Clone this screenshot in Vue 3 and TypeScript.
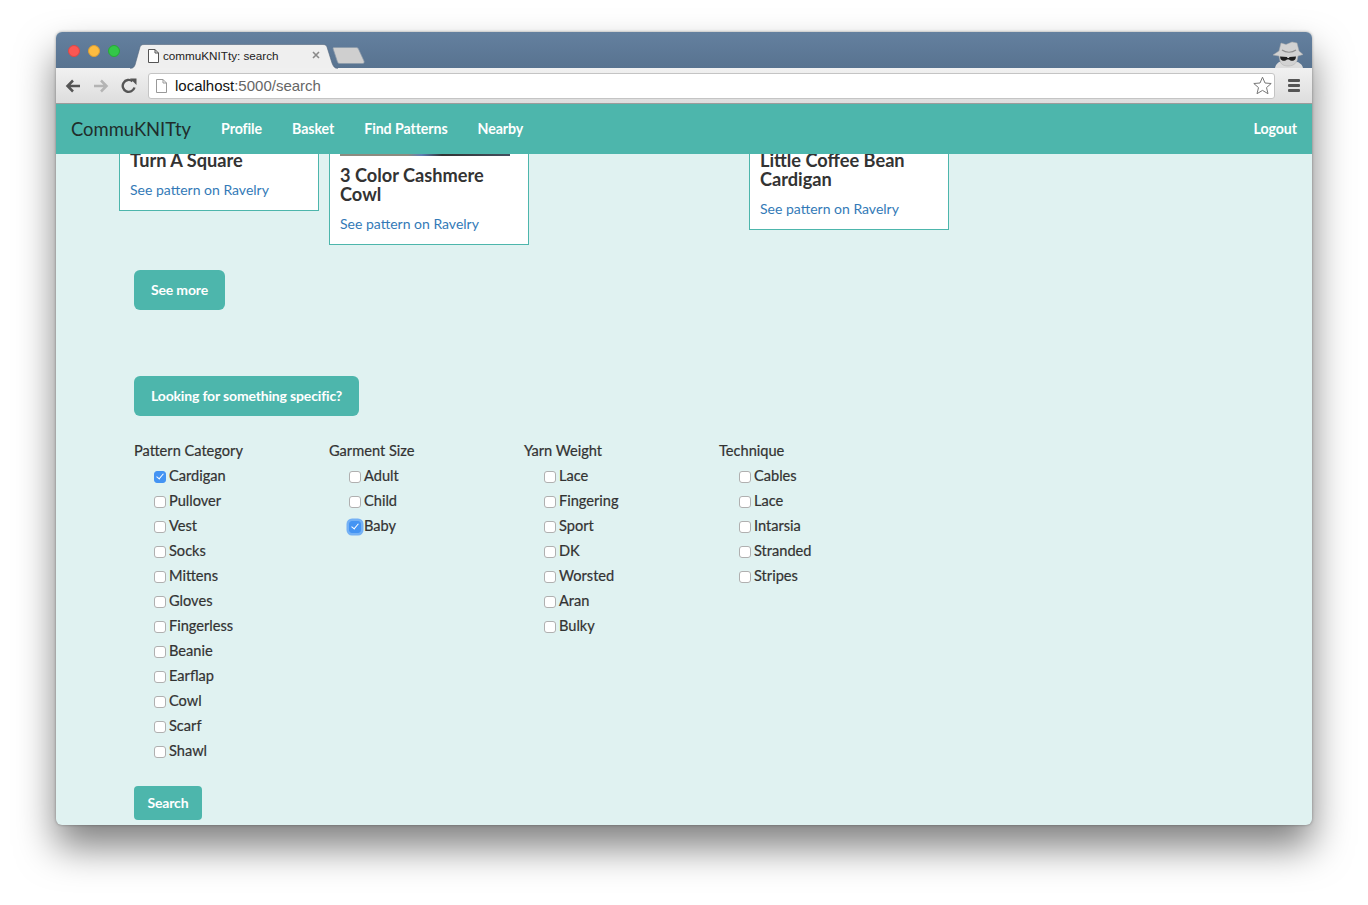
<script setup lang="ts">
interface Group {
  title: string
  options: string[]
}

const checked = ['Cardigan', 'Baby']

const navLinks = ['Profile', 'Basket', 'Find Patterns', 'Nearby']

const groups: Group[] = [
  {
    title: 'Pattern Category',
    options: ['Cardigan', 'Pullover', 'Vest', 'Socks', 'Mittens', 'Gloves', 'Fingerless', 'Beanie', 'Earflap', 'Cowl', 'Scarf', 'Shawl'],
  },
  { title: 'Garment Size', options: ['Adult', 'Child', 'Baby'] },
  { title: 'Yarn Weight', options: ['Lace', 'Fingering', 'Sport', 'DK', 'Worsted', 'Aran', 'Bulky'] },
  { title: 'Technique', options: ['Cables', 'Lace', 'Intarsia', 'Stranded', 'Stripes'] },
]
</script>

<template>
  <div class="desktop">
    <div class="window">
      <div class="titlebar">
        <div class="lights">
          <span class="light red"></span>
          <span class="light yellow"></span>
          <span class="light green"></span>
        </div>
        <div class="tab">
          <svg class="tab-bg" width="210" height="25" viewBox="0 0 210 25">
            <path d="M0 24.5 C3 24.5 4 23 5 21 L10 3 C10.5 1.5 11.5 .5 14 .5 L193 .5 C195.5 .5 196.5 1.5 197 3 L202 19 C203.5 23 205 24.5 208 24.5" fill="#efefef" stroke="#54677c" stroke-width=".6" />
          </svg>
          <svg class="page-icon" width="11" height="14" viewBox="0 0 11 14">
            <path d="M.5.5 H7 L10.5 4 V13.5 H.5 Z M7 .5 V4 H10.5" fill="#fff" stroke="#555" stroke-width="1" />
          </svg>
          <span class="tab-title">commuKNITty: search</span>
          <svg class="tab-close" width="8" height="8" viewBox="0 0 8 8">
            <path d="M1 1 L7 7 M7 1 L1 7" stroke="#8a8a8a" stroke-width="1.6" />
          </svg>
        </div>
        <svg class="new-tab" width="33" height="17" viewBox="0 0 33 17">
          <path d="M1 1.5 C1 1 1.5 .5 2 .5 L24 .5 C25.5 .5 26 1 26.5 2 L32 14 C32.5 15.5 32 16.5 30.5 16.5 L8 16.5 C6.5 16.5 6 16 5.5 15 Z" fill="#cfcfcf" stroke="#8a99a9" stroke-width=".7" />
        </svg>
        <svg class="incognito" width="34" height="27" viewBox="0 0 34 27">
          <path d="M3 27 C4 23 6 21 10 20 L22 20 C27 21 30 23 31 27 Z" fill="#dcdcdc" />
          <path d="M9 2 L14 3.5 L20 1 L25 2 L27 10 L31 13.5 L26 15 L25 20 C23 24 19 25 16 25 C13 25 9 24 8 20 L7 15 L1 14 L7 10 Z" fill="#d2d2d2" stroke="#adadad" stroke-width=".5" />
          <path d="M10 9 C14 12 20 12 24 9" fill="none" stroke="#8e8e8e" stroke-width="1.2" />
          <path d="M8 15.5 L15 16 L15.5 17 L17 17 L17.5 16 L24 15.5 L23.5 18 C22 20.5 18.5 20 17 18.5 L15 18.5 C13.5 20 10 20.5 8.5 18 Z" fill="#1e1e1e" />
        </svg>
      </div>

      <div class="toolbar">
        <svg class="tool" width="16" height="14" viewBox="0 0 16 14">
          <path d="M15 7 H3 M8 1.5 L2.5 7 L8 12.5" fill="none" stroke="#555" stroke-width="2.5" />
        </svg>
        <svg class="tool" width="16" height="14" viewBox="0 0 16 14">
          <path d="M1 7 H13 M8 1.5 L13.5 7 L8 12.5" fill="none" stroke="#b4b4b4" stroke-width="2.5" />
        </svg>
        <svg class="tool" width="16" height="16" viewBox="0 0 16 16">
          <path d="M13.5 9.5 A6 6 0 1 1 11.5 3.2" fill="none" stroke="#555" stroke-width="2.4" />
          <path d="M9 .5 H15.5 V7 Z" fill="#555" />
        </svg>
        <div class="omnibox">
          <svg class="page-icon-url" width="11" height="14" viewBox="0 0 11 14">
            <path d="M.5.5 H7 L10.5 4 V13.5 H.5 Z M7 .5 V4 H10.5" fill="#fff" stroke="#999" stroke-width="1" />
          </svg>
          <span class="url"><span class="host">localhost</span>:5000/search</span>
          <svg class="star" width="19" height="19" viewBox="0 0 19 19">
            <path d="M9.5 1.2 L12 7 L18.2 7.5 L13.5 11.6 L15 17.7 L9.5 14.4 L4 17.7 L5.5 11.6 L.8 7.5 L7 7 Z" fill="#fff" stroke="#777" stroke-width="1" />
          </svg>
        </div>
        <div class="menu">
          <span></span>
          <span></span>
          <span></span>
        </div>
      </div>

      <nav class="navbar">
        <a class="brand">CommuKNITty</a>
        <a v-for="link in navLinks" :key="link" class="nav-link">{{ link }}</a>
        <a class="nav-link logout">Logout</a>
      </nav>

      <main class="content">
        <div class="results">
          <div class="card card-a">
            <h3>Turn A Square</h3>
            <a class="pattern-link">See pattern on Ravelry</a>
          </div>
          <div class="card card-b">
            <div class="photo"></div>
            <h3>3 Color Cashmere Cowl</h3>
            <a class="pattern-link">See pattern on Ravelry</a>
          </div>
          <div class="card card-empty"></div>
          <div class="card card-c">
            <h3>Little Coffee Bean Cardigan</h3>
            <a class="pattern-link">See pattern on Ravelry</a>
          </div>
        </div>

        <button class="btn btn-large see-more">See more</button>
        <button class="btn btn-large specific">Looking for something specific?</button>

        <form class="filters" @submit.prevent>
          <div v-for="group in groups" :key="group.title" class="filter-group">
            <div class="group-title">{{ group.title }}</div>
            <label v-for="option in group.options" :key="option" class="option">
              <input
                type="checkbox"
                :checked="checked.includes(option)"
                :class="{ focused: option === 'Baby' }"
              />
              <span>{{ option }}</span>
            </label>
          </div>
        </form>

        <button class="btn search">Search</button>
      </main>
    </div>
  </div>
</template>

<style>
html,
body {
  margin: 0;
  background: #fff;
}
</style>

<style scoped>
.desktop {
  width: 1368px;
  height: 905px;
  padding: 32px 56px 0;
  box-sizing: border-box;
  overflow: hidden;
  background: #fff;
}

.window {
  height: 793px;
  display: flex;
  flex-direction: column;
  overflow: hidden;
  border-radius: 6px;
  box-shadow: 0 22px 38px rgba(0, 0, 0, 0.5), 0 0 3px rgba(0, 0, 0, 0.35);
  font-family: Lato, "Open Sans", sans-serif;
  color: #333;
  background: #e0f2f1;
}

.titlebar {
  height: 36px;
  flex: none;
  display: flex;
  align-items: flex-start;
  position: relative;
  background: linear-gradient(#64809f, #587390);
}

.lights {
  display: flex;
  gap: 8px;
  padding: 13px 0 0 12px;
  width: 64px;
  flex: none;
}

.light {
  width: 12px;
  height: 12px;
  border-radius: 50%;
  box-sizing: border-box;
}

.red {
  background: #fc5753;
  border: 1px solid #df4744;
}

.yellow {
  background: #fdbc40;
  border: 1px solid #de9f34;
}

.green {
  background: #33c748;
  border: 1px solid #27aa35;
}

.tab {
  width: 198px;
  height: 24px;
  margin: 12px 0 0;
  position: relative;
  display: flex;
  align-items: center;
  padding: 0 0 2px 16px;
  box-sizing: border-box;
  flex: none;
}

.tab-bg {
  position: absolute;
  left: -2px;
  top: 0;
}

.page-icon {
  position: relative;
  margin: 1px 4px 0 0;
}

.tab-title {
  position: relative;
  font: 11.7px "Liberation Sans", Arial, sans-serif;
  color: #222;
  white-space: nowrap;
}

.tab-close {
  position: relative;
  margin-left: 33px;
}

.new-tab {
  flex: none;
  margin: 15px 0 0 2px;
}

.incognito {
  position: absolute;
  right: 6px;
  top: 9px;
}

.toolbar {
  height: 36px;
  flex: none;
  display: flex;
  align-items: center;
  box-sizing: border-box;
  padding: 0 12px 0 9px;
  background: linear-gradient(#f1f1f1, #dddddd);
  border-bottom: 1px solid #9c9c9c;
}

.tool {
  flex: none;
  margin-right: 12px;
}

.omnibox {
  flex: 1;
  height: 26px;
  margin-left: -1px;
  display: flex;
  align-items: center;
  box-sizing: border-box;
  padding: 0 2px 0 7px;
  background: #fff;
  border: 1px solid #c4c4c4;
  border-radius: 3px;
}

.page-icon-url {
  flex: none;
}

.url {
  margin-left: 8px;
  flex: 1;
  font: 15px "Liberation Sans", Arial, sans-serif;
  color: #666;
}

.host {
  color: #111;
}

.menu {
  width: 12px;
  margin-left: 13px;
  display: flex;
  flex-direction: column;
  gap: 2px;
  flex: none;
}

.menu span {
  height: 3px;
  background: #555;
  border-radius: 1px;
}

.navbar {
  height: 50px;
  flex: none;
  display: flex;
  align-items: center;
  box-sizing: border-box;
  padding: 0 15px 1px;
  background: #4db6ac;
  position: relative;
  z-index: 1;
}

.brand {
  font-size: 18.4px;
  color: #1f2d2b;
  margin-right: 30px;
}

.nav-link {
  font-size: 14.2px;
  font-weight: 700;
  letter-spacing: -0.08px;
  color: #fff;
  margin-right: 30px;
}

.logout {
  margin: 0 0 0 auto;
}

.content {
  flex: 1;
  min-height: 0;
  display: flex;
  flex-direction: column;
  align-items: flex-start;
  padding-left: 78px;
  overflow: hidden;
}

.results {
  display: grid;
  grid-template-columns: repeat(4, 200px);
  column-gap: 10px;
  align-items: start;
  margin: -100px 0 0 -15px;
}

.card {
  background: #fff;
  border: 1px solid #4db6ac;
  padding: 0 10px 10px;
  box-sizing: border-box;
}

.card-empty {
  visibility: hidden;
}

.card-a {
  padding-top: 96px;
}

.card-c {
  padding-top: 96px;
}

.photo {
  height: 101px;
  width: 170px;
  margin-bottom: 10px;
  background: linear-gradient(90deg, #8d8b80 0, #8d8b80 40%, #5f7fb5 48%, #333 60%, #44505f 100%);
}

.card h3 {
  font-size: 18.2px;
  line-height: 19px;
  font-weight: 700;
  margin: 0 0 10px;
  color: #333;
}

.pattern-link {
  display: block;
  font-size: 14px;
  line-height: 20px;
  color: #337ab7;
}

.btn {
  display: block;
  border: 0;
  color: #fff;
  background: #4db6ac;
  font-family: inherit;
  font-weight: 700;
  font-size: 14px;
  letter-spacing: -0.16px;
  padding: 0 17px 2px;
}

.btn-large {
  height: 40px;
  border-radius: 6px;
}

.see-more {
  margin-top: 25px;
}

.specific {
  margin-top: 66px;
}

.filters {
  display: flex;
  margin-top: 25px;
}

.filter-group {
  width: 195px;
}

.group-title {
  font-size: 14.6px;
  line-height: 20px;
  margin-bottom: 4px;
  -webkit-text-stroke: 0.2px #333;
}

.option {
  display: flex;
  align-items: center;
  height: 20px;
  margin-bottom: 5px;
  padding-left: 20px;
  font-size: 14.6px;
  -webkit-text-stroke: 0.2px #333;
}

.option input {
  appearance: none;
  width: 12px;
  height: 12px;
  margin: 3px 3px 0 0;
  flex: none;
  position: relative;
  box-sizing: border-box;
  border: 1px solid #b0b0b0;
  border-radius: 3px;
  background: #fff;
}

.option input:checked {
  background: #4494f3;
  border-color: #4494f3;
}

.option input:checked::after {
  content: "";
  position: absolute;
  left: 3px;
  top: 0.5px;
  width: 3px;
  height: 6px;
  border: solid #fff;
  border-width: 0 1.5px 1.5px 0;
  transform: rotate(40deg);
}

.option input.focused {
  box-shadow: 0 0 0 2.5px rgba(80, 155, 245, 0.75);
}

.search {
  height: 34px;
  border-radius: 4px;
  padding: 0 13.5px 2px;
  margin-top: 21px;
}
</style>
